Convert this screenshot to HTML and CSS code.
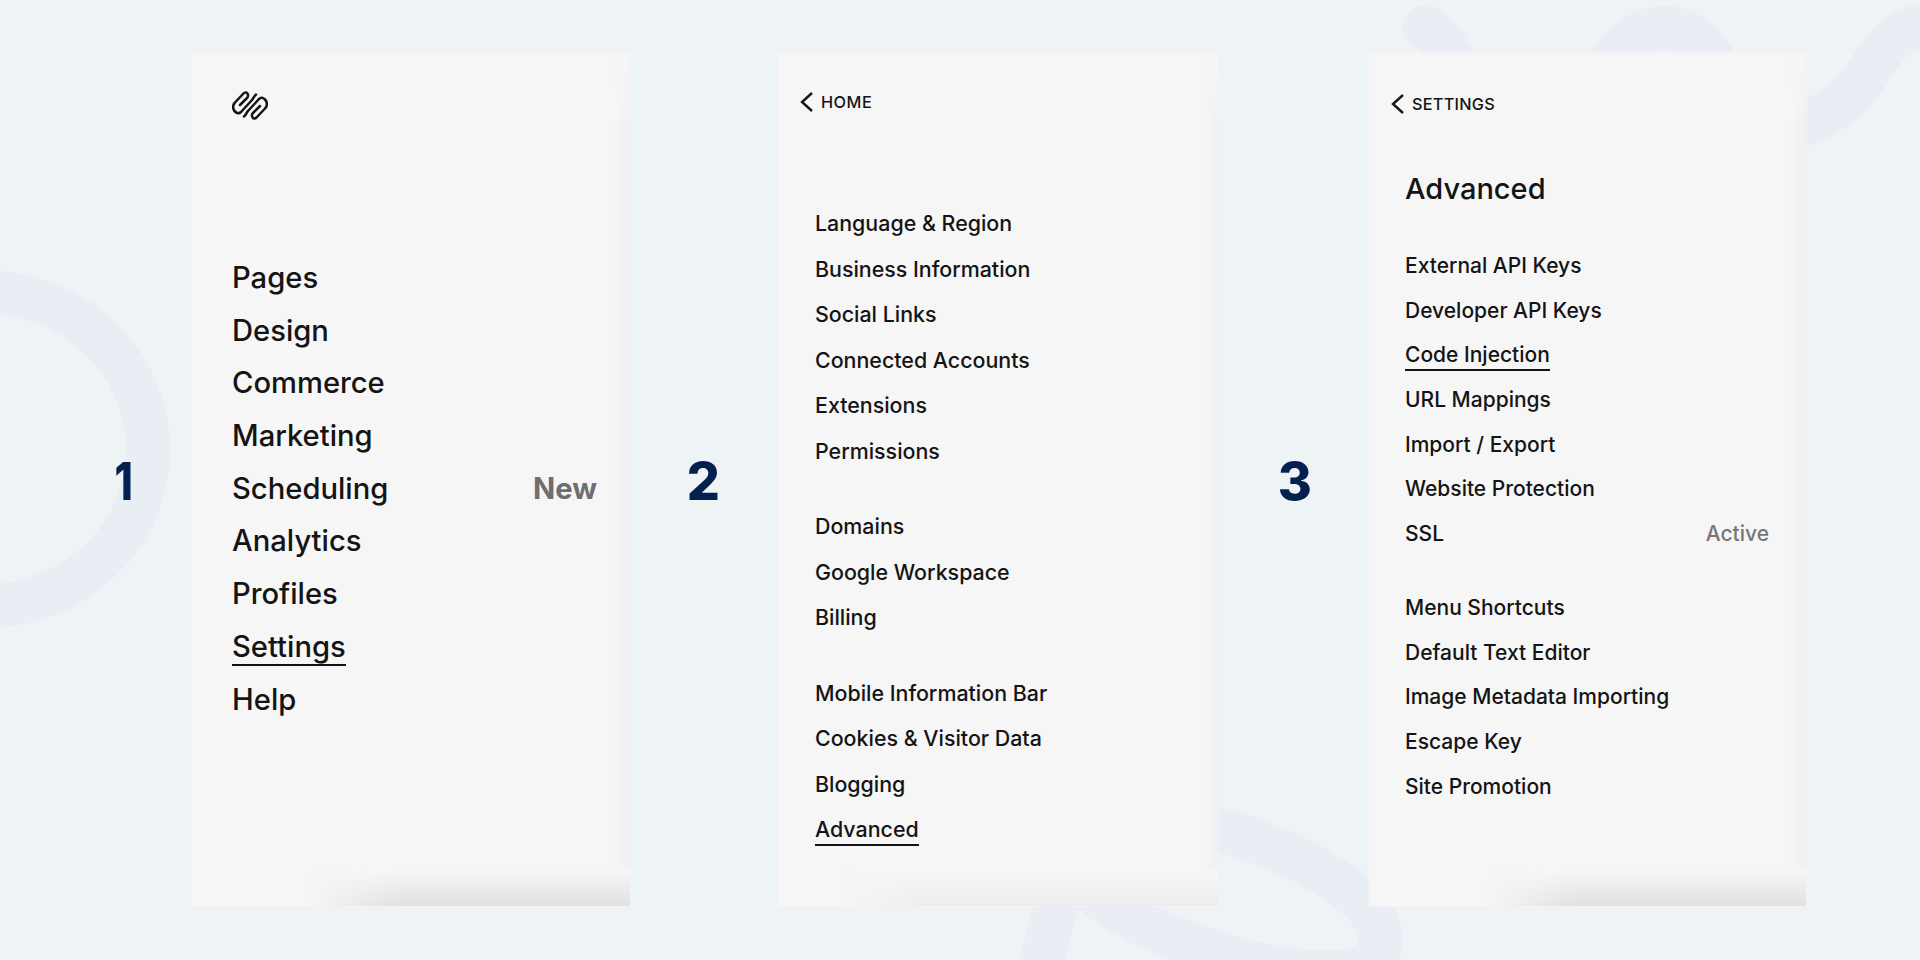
FILE: index.html
```html
<!DOCTYPE html>
<html lang="en">

<head>
    <meta charset="UTF-8">
    <meta name="viewport" content="width=device-width, initial-scale=1.0">
    <title>Code Injection Steps</title>
    <link rel="stylesheet" href="styles.css">
</head>

<body>
    <svg class="decor" viewBox="0 0 1920 960" aria-hidden="true">
        <path d="M-30,293 C70,285 148,360 148,450 C148,540 70,612 -30,606" />
        <path d="M1425,27 C1440,35 1455,60 1470,90" />
        <path d="M1600,90 C1620,10 1705,5 1725,90" />
        <path d="M1930,25 C1890,28 1880,55 1865,77 C1850,100 1830,115 1795,127" />
        <path d="M1200,825 C1290,845 1381,895 1381,940 C1381,985 1300,975 1240,960 C1190,945 1130,925 1090,890" />
        <path d="M1060,890 L1040,970" />
    </svg>

    <div class="steps">
        <section class="step step-one">
            <div class="number"><span>1</span></div>
            <div class="panel">
                <svg class="logo" viewBox="0 0 36 29" aria-hidden="true">
                    <path d="M8,14 L15,7 C17,5 16,2 14,1.5 C13,1 12,2 11,3 L3,11.5 C0.5,14 0.5,18 3,20.5 C5,22.5 7,23 9,21 L20,9 C21.5,7.5 22,5 24,3.5" />
                    <path d="M28,15 L21,22 C19,24 20,27 22,27.5 C23,28 24,27 25,26 L33,17.5 C35.5,15 35.5,11 33,8.5 C31,6.5 29,6 27,8 L16,20 C14.5,21.5 14,24 12,25.5" />
                </svg>
                <ul class="menu menu-large">
                    <li>Pages</li>
                    <li>Design</li>
                    <li>Commerce</li>
                    <li>Marketing</li>
                    <li class="split">Scheduling <span class="tag tag-strong">New</span></li>
                    <li>Analytics</li>
                    <li>Profiles</li>
                    <li><span class="active">Settings</span></li>
                    <li>Help</li>
                </ul>
            </div>
        </section>

        <section class="step step-two">
            <div class="number">2</div>
            <div class="panel">
                <div class="back">
                    <svg viewBox="0 0 15 22" aria-hidden="true"><path d="M13,2 L3,11 L13,20" /></svg>
                    HOME
                </div>
                <ul class="menu menu-small">
                    <li>Language &amp; Region</li>
                    <li>Business Information</li>
                    <li>Social Links</li>
                    <li>Connected Accounts</li>
                    <li>Extensions</li>
                    <li>Permissions</li>
                </ul>
                <ul class="menu menu-small">
                    <li>Domains</li>
                    <li>Google Workspace</li>
                    <li>Billing</li>
                </ul>
                <ul class="menu menu-small">
                    <li>Mobile Information Bar</li>
                    <li>Cookies &amp; Visitor Data</li>
                    <li>Blogging</li>
                    <li><span class="active">Advanced</span></li>
                </ul>
            </div>
        </section>

        <section class="step step-three">
            <div class="number">3</div>
            <div class="panel">
                <div class="back">
                    <svg viewBox="0 0 15 22" aria-hidden="true"><path d="M13,2 L3,11 L13,20" /></svg>
                    SETTINGS
                </div>
                <h2>Advanced</h2>
                <ul class="menu menu-tight">
                    <li>External API Keys</li>
                    <li>Developer API Keys</li>
                    <li><span class="active">Code Injection</span></li>
                    <li>URL Mappings</li>
                    <li>Import / Export</li>
                    <li>Website Protection</li>
                    <li class="split">SSL <span class="tag">Active</span></li>
                </ul>
                <ul class="menu menu-tight">
                    <li>Menu Shortcuts</li>
                    <li>Default Text Editor</li>
                    <li>Image Metadata Importing</li>
                    <li>Escape Key</li>
                    <li>Site Promotion</li>
                </ul>
            </div>
        </section>
    </div>
</body>

</html>
```

FILE: styles.css
```css
body {
    font-family: Inter, "Liberation Sans", sans-serif;
    margin: 0;
    padding: 0;
    height: 960px;
    overflow: hidden;
    background-color: #eef3f6;
    color: #141414;
}

.decor {
    position: absolute;
    top: 0;
    left: 0;
    width: 1920px;
    height: 960px;
}

.decor path {
    fill: none;
    stroke: #e9edf4;
    stroke-width: 44;
    stroke-linecap: round;
}

.steps {
    position: relative;
    display: flex;
    height: 853px;
    padding-top: 53px;
}

.step {
    display: flex;
    align-items: center;
}

.step-one {
    width: 630px;
}

.step-two {
    width: 588px;
}

.step-three {
    width: 588px;
}

.number {
    font-size: 52px;
    font-weight: 800;
    color: #04204f;
    line-height: 1;
    padding-top: 5px;
    box-sizing: border-box;
    text-align: right;
}

/* the 1 in the reference is narrower than Inter's */
.number span {
    display: inline-block;
    transform: scaleX(0.8);
    transform-origin: right center;
}

.step-one .number {
    width: 192px;
    padding-right: 59px;
}

.step-two .number {
    width: 148px;
    padding-right: 58px;
}

.step-three .number {
    width: 151px;
    padding-right: 57px;
}

.panel {
    position: relative;
    align-self: stretch;
    flex: 1;
    background-color: #f6f6f6;
    box-shadow: 0 0 5px rgba(246, 246, 246, 0.8);
    overflow: hidden;
}

/* soft shading on the right and bottom edges */
.panel::before {
    content: "";
    position: absolute;
    top: 0;
    right: 0;
    bottom: 0;
    width: 16px;
    background: linear-gradient(to left, #f0f0f0, #f6f6f6);
    -webkit-mask-image: linear-gradient(to bottom, transparent, #000 70px);
    mask-image: linear-gradient(to bottom, transparent, #000 70px);
}

.panel::after {
    content: "";
    position: absolute;
    left: 115px;
    right: 0;
    bottom: 0;
    height: 36px;
    background: linear-gradient(to top, #e2e1e2, #f6f6f6);
    -webkit-mask-image: linear-gradient(to right, transparent, #000 90px);
    mask-image: linear-gradient(to right, transparent, #000 90px);
}

.step-two .panel::after {
    left: 60px;
    background: linear-gradient(to top, #ececec, #f6f6f6);
}

.logo {
    display: block;
    width: 36px;
    height: 29px;
    margin: 38px 0 0 40px;
}

.logo path {
    fill: none;
    stroke: #141414;
    stroke-width: 2.5;
    stroke-linecap: round;
}

.menu {
    list-style: none;
    margin: 0;
    padding: 0;
    font-weight: 550;
    position: relative;
    z-index: 1;
}

.menu li {
    white-space: nowrap;
}

.split {
    display: flex;
    justify-content: space-between;
}

.tag {
    color: #777;
    font-weight: 500;
}

.tag-strong {
    color: #6f6f6f;
    font-weight: 650;
}

.active {
    display: inline-block;
    border-bottom: 2.5px solid #141414;
}

.menu-large {
    margin: 132px 33px 0 40px;
    font-size: 29.2px;
}

.menu-large li {
    height: 52.7px;
    line-height: 52.7px;
}

.menu-large .active {
    line-height: 34px;
}

.menu-small {
    margin: 0 0 30px 37px;
    font-size: 21.4px;
}

.menu-small li {
    height: 45.5px;
    line-height: 45.5px;
}

.menu-small .active {
    line-height: 29px;
}

.back {
    display: flex;
    align-items: center;
    gap: 7px;
    font-size: 16.3px;
    font-weight: 550;
    letter-spacing: 0.5px;
    margin: 37px 0 63px 21px;
    height: 24px;
}

.back svg {
    width: 15px;
    height: 22px;
}

.back path {
    fill: none;
    stroke: #141414;
    stroke-width: 2.4;
}

.step-two .back {
    margin-bottom: 87px;
}

.step-three .back {
    margin-top: 39px;
    margin-bottom: 61px;
    letter-spacing: 0.25px;
}

h2 {
    font-size: 29px;
    font-weight: 550;
    margin: -6px 0 37px 36px;
    line-height: 36px;
}

.menu-tight {
    margin: 0 37px 29px 36px;
    font-size: 21px;
}

.menu-tight li {
    height: 44.7px;
    line-height: 44.7px;
}

.menu-tight .active {
    line-height: 28px;
}
```
